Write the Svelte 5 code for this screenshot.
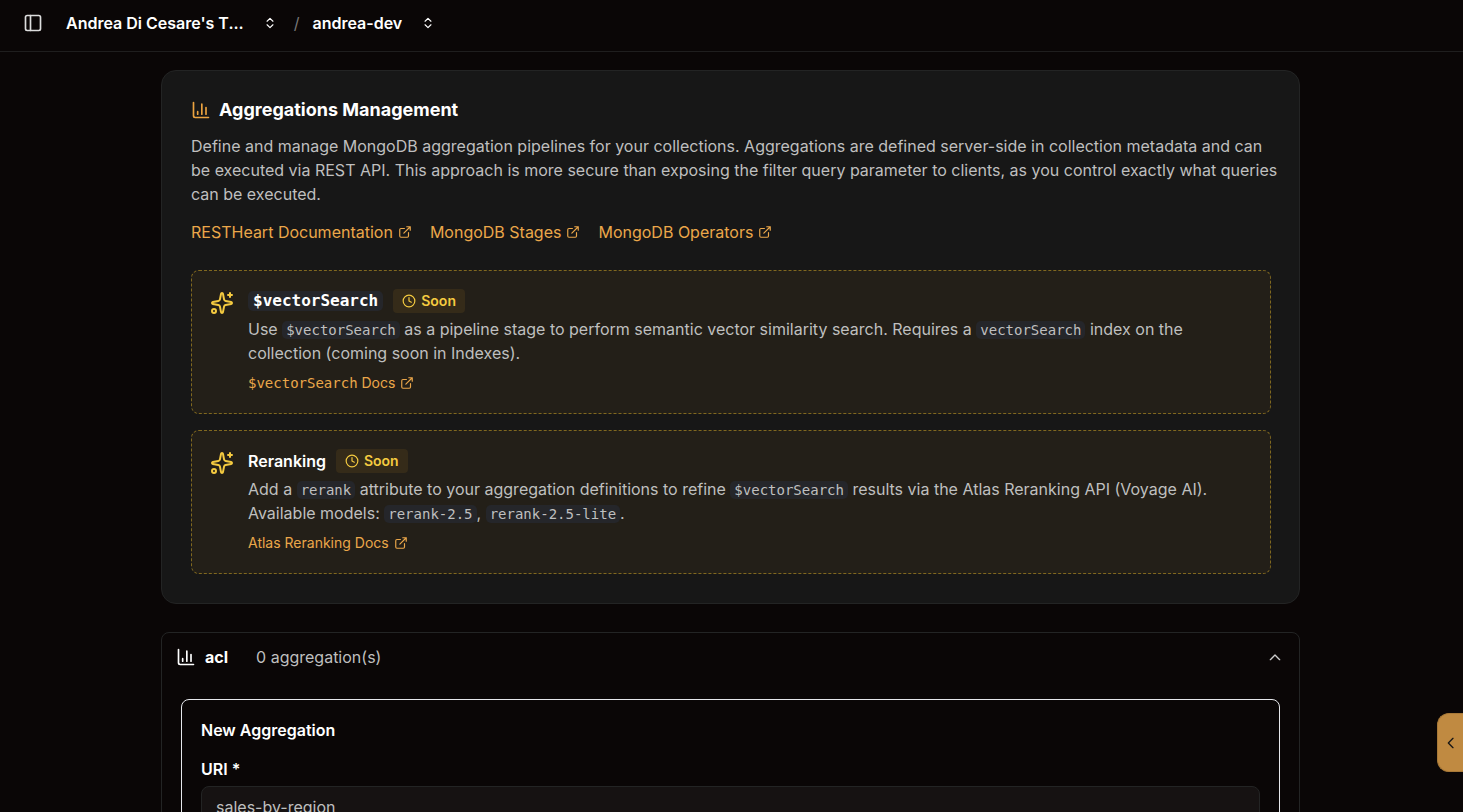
<script lang="ts">
  let expanded = $state(true);
  let uri = $state("");

  const docs = [
    { label: "RESTHeart Documentation", href: "#restheart" },
    { label: "MongoDB Stages", href: "#stages" },
    { label: "MongoDB Operators", href: "#operators" },
  ];
</script>

{#snippet chart()}
  <svg class="icon chart" viewBox="0 0 24 24" aria-hidden="true">
    <path d="M3 3v16a2 2 0 0 0 2 2h16M8 17v-3M13 17V5M18 17V9" />
  </svg>
{/snippet}

{#snippet external()}
  <svg class="icon external" viewBox="0 0 24 24" aria-hidden="true">
    <path d="M15 3h6v6M10 14 21 3M18 13v6a2 2 0 0 1-2 2H5a2 2 0 0 1-2-2V8a2 2 0 0 1 2-2h6" />
  </svg>
{/snippet}

{#snippet updown()}
  <svg class="icon updown" viewBox="0 0 24 24" aria-hidden="true">
    <path d="m7 15 5 5 5-5M7 9l5-5 5 5" />
  </svg>
{/snippet}

{#snippet sparkles()}
  <svg class="icon sparkles" viewBox="0 0 24 24" aria-hidden="true">
    <path
      d="M11.017 2.814a1 1 0 0 1 1.966 0l1.051 5.558a2 2 0 0 0 1.594 1.594l5.558 1.051a1 1 0 0 1 0 1.966l-5.558 1.051a2 2 0 0 0-1.594 1.594l-1.051 5.558a1 1 0 0 1-1.966 0l-1.051-5.558a2 2 0 0 0-1.594-1.594l-5.558-1.051a1 1 0 0 1 0-1.966l5.558-1.051a2 2 0 0 0 1.594-1.594zM20 2v4M22 4h-4"
    />
    <circle cx="4" cy="20" r="2" />
  </svg>
{/snippet}

{#snippet soon()}
  <span class="badge">
    <svg class="icon clock" viewBox="0 0 24 24" aria-hidden="true">
      <circle cx="12" cy="12" r="10" />
      <path d="M12 6v6l4 2" />
    </svg>
    Soon
  </span>
{/snippet}

<header class="topbar">
  <button class="plain" aria-label="Toggle sidebar">
    <svg class="icon sidebar" viewBox="0 0 24 24" aria-hidden="true">
      <rect x="3" y="3" width="18" height="18" rx="2" />
      <path d="M9 3v18" />
    </svg>
  </button>
  <nav class="crumbs">
    <button class="plain crumb">Andrea Di Cesare's T...{@render updown()}</button>
    <span class="slash">/</span>
    <button class="plain crumb">andrea-dev{@render updown()}</button>
  </nav>
</header>

<main>
  <section class="intro">
    <h1>{@render chart()}Aggregations Management</h1>
    <p class="lead">
      Define and manage MongoDB aggregation pipelines for your collections. Aggregations are defined
      server-side in collection metadata and can be executed via REST API. This approach is more
      secure than exposing the filter query parameter to clients, as you control exactly what
      queries can be executed.
    </p>
    <div class="links">
      {#each docs as doc}
        <a href={doc.href}>{doc.label}{@render external()}</a>
      {/each}
    </div>

    <article class="callout">
      {@render sparkles()}
      <div>
        <h2><code>$vectorSearch</code>{@render soon()}</h2>
        <p>
          Use <code>$vectorSearch</code> as a pipeline stage to perform semantic vector similarity
          search. Requires a <code>vectorSearch</code> index on the collection (coming soon in Indexes).
        </p>
        <a class="small" href="#vector-search"><span><span class="mono">$vectorSearch</span> Docs</span>{@render external()}</a>
      </div>
    </article>

    <article class="callout">
      {@render sparkles()}
      <div>
        <h2>Reranking{@render soon()}</h2>
        <p>
          Add a <code>rerank</code> attribute to your aggregation definitions to refine
          <code>$vectorSearch</code> results via the Atlas Reranking API (Voyage AI). Available models:
          <code>rerank-2.5</code>, <code>rerank-2.5-lite</code>.
        </p>
        <a class="small" href="#reranking">Atlas Reranking Docs{@render external()}</a>
      </div>
    </article>
  </section>

  <section class="collection">
    <button class="plain toggle" aria-expanded={expanded} onclick={() => (expanded = !expanded)}>
      {@render chart()}
      <strong>acl</strong>
      <span class="count">0 aggregation(s)</span>
      <svg class="icon chevron" class:closed={!expanded} viewBox="0 0 24 24" aria-hidden="true">
        <path d="m5 16 7-7 7 7" />
      </svg>
    </button>
    {#if expanded}
      <form class="editor">
        <h3>New Aggregation</h3>
        <label for="uri">URI *</label>
        <input id="uri" type="text" placeholder="sales-by-region" bind:value={uri} />
      </form>
    {/if}
  </section>
</main>

<button class="drawer" aria-label="Open panel">
  <svg class="icon" viewBox="0 0 24 24" aria-hidden="true">
    <path d="m15 19-7-7 7-7" />
  </svg>
</button>

<style>
  :global(body) {
    background: #0a0606;
    color: #fff;
    font: 400 16px/24px Inter, sans-serif;
    height: 100vh;
    overflow: hidden;
  }
  button,
  input {
    font: inherit;
    color: inherit;
    box-sizing: border-box;
  }
  h1,
  h2,
  h3,
  p {
    margin: 0;
  }
  .plain {
    padding: 0;
    background: none;
    border: 0;
    cursor: pointer;
  }
  .icon {
    width: 16px;
    height: 16px;
    flex: none;
    fill: none;
    stroke: currentColor;
    stroke-width: 2;
    stroke-linecap: round;
    stroke-linejoin: round;
  }

  .topbar {
    display: flex;
    align-items: center;
    gap: 23px;
    height: 52px;
    padding: 0 23px 5px;
    box-sizing: border-box;
    border-bottom: 1px solid #1f1e1e;
  }
  .topbar .plain {
    display: flex;
    align-items: center;
  }
  .topbar .sidebar {
    width: 20px;
    height: 20px;
    color: #ddd;
  }
  .crumbs {
    display: flex;
    align-items: center;
    gap: 13px;
  }
  .topbar .crumb {
    gap: 19px;
    font-weight: 600;
  }
  .updown {
    width: 14px;
    height: 14px;
  }
  .slash {
    margin-left: 4px;
    color: #777;
  }

  main {
    display: flex;
    flex-direction: column;
    gap: 28px;
    max-width: 1139px;
    margin: 18px auto 0;
    padding-right: 2px;
  }
  .intro {
    padding: 25px 28px 29px 29px;
    background: #171717;
    border: 1px solid #232424;
    border-radius: 15px;
  }
  h1 {
    display: flex;
    align-items: center;
    gap: 8px;
    font-size: 18px;
    font-weight: 700;
    line-height: 28px;
  }
  .chart {
    width: 20px;
    height: 20px;
  }
  h1 .chart {
    color: #eba340;
  }
  p {
    color: #bfbfbf;
  }
  .lead {
    margin: 10px -8px 0 0;
  }
  a {
    display: flex;
    align-items: center;
    gap: 5px;
    width: fit-content;
    color: #eba74a;
    text-decoration: none;
  }
  .external {
    width: 14px;
    height: 14px;
  }
  .links {
    display: flex;
    gap: 18px;
    margin: 14px 0 26px;
  }

  .callout {
    display: flex;
    gap: 14px;
    padding: 18px;
    background: #231f18;
    border: 1px dashed #80681f;
    border-radius: 8px;
  }
  .callout + .callout {
    margin-top: 16px;
  }
  .sparkles {
    width: 24px;
    height: 24px;
    margin-top: 2px;
    color: #f5cb40;
  }
  h2 {
    display: flex;
    align-items: center;
    gap: 10px;
    margin-bottom: 4px;
    font-size: 16px;
    font-weight: 600;
    line-height: 24px;
  }
  code,
  .mono {
    font-family: "DejaVu Sans Mono", monospace;
    font-size: 14px;
    font-weight: 400;
    line-height: 16px;
  }
  code {
    padding: 1px 4px;
    background: #25262a;
    border-radius: 5px;
  }
  h2 code {
    padding: 1px 5px;
    font-size: 16px;
    font-weight: 600;
    line-height: 18px;
  }
  .badge {
    display: flex;
    align-items: center;
    gap: 5px;
    padding: 2px 9px;
    background: #352b19;
    border-radius: 4px;
    color: #f5cb40;
    font-size: 14px;
    line-height: 20px;
  }
  .clock {
    width: 14px;
    height: 14px;
  }
  .small {
    margin-top: 6px;
    font-size: 14px;
  }

  .collection {
    border: 1px solid #232424;
    border-radius: 8px;
  }
  .toggle {
    display: flex;
    align-items: center;
    gap: 9px;
    width: 100%;
    padding: 12px 16px 12px 14px;
    text-align: left;
  }
  strong {
    font-weight: 700;
  }
  .count {
    margin-left: 19px;
    color: #bfbfbf;
  }
  .chevron {
    margin-left: auto;
    color: #ccc;
  }
  .closed {
    rotate: 180deg;
  }
  .editor {
    display: flex;
    flex-direction: column;
    margin: 18px 19px;
    padding: 18px 19px;
    border: 1px solid #e5e7eb;
    border-radius: 8px;
  }
  h3 {
    font-size: 16px;
    font-weight: 600;
    line-height: 24px;
  }
  label {
    margin: 15px 0 5px;
    font-weight: 600;
  }
  input {
    height: 42px;
    padding: 0 14px;
    background: #161212;
    border: 1px solid #232424;
    border-radius: 8px;
  }
  input::placeholder {
    color: #bfbfbf;
    opacity: 1;
  }

  /* pull tab fixed to the window's right edge */
  .drawer {
    position: fixed;
    right: 0;
    bottom: 40px;
    display: flex;
    align-items: center;
    justify-content: center;
    width: 26px;
    height: 59px;
    padding: 0;
    background: #c08a41;
    border: 1px solid #a87938;
    border-right: 0;
    border-radius: 12px 0 0 12px;
    color: #171717;
    cursor: pointer;
  }
</style>
